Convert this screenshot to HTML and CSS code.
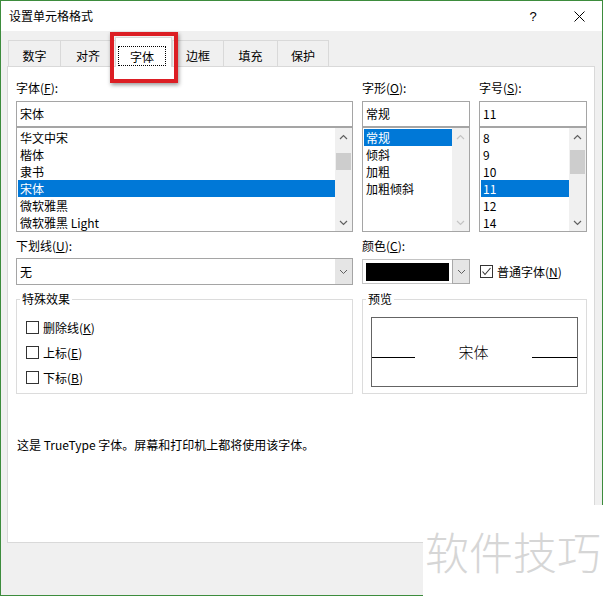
FILE: index.html
```html
<!DOCTYPE html>
<html lang="zh-CN">
<head>
<meta charset="utf-8">
<title>设置单元格格式</title>
<link rel="stylesheet" href="styles.css">
</head>
<body>
<div class="window">
  <div class="titlebar">
    <div class="title">设置单元格格式</div>
    <div class="tb-buttons">
      <div class="tb-btn help">?</div>
      <div class="tb-btn">
        <svg width="11" height="11" viewBox="0 0 11 11"><path d="M0.5 0.5 L10.5 10.5 M10.5 0.5 L0.5 10.5" stroke="#000" stroke-width="1" fill="none"/></svg>
      </div>
    </div>
  </div>

  <div class="tabstrip">
    <div class="tab t-num">数字</div>
    <div class="tab t-align">对齐</div>
    <div class="tab tab-active"><span class="focus">字体</span></div>
    <div class="tab t-border">边框</div>
    <div class="tab t-fill">填充</div>
    <div class="tab t-protect">保护</div>
  </div>

  <div class="panel">
    <div class="grid">
      <div class="field">
        <div class="label">字体(<u>F</u>):</div>
        <div class="textbox">宋体</div>
        <div class="listbox">
          <ul class="items">
            <li>华文中宋</li>
            <li>楷体</li>
            <li>隶书</li>
            <li class="sel">宋体</li>
            <li>微软雅黑</li>
            <li>微软雅黑 Light</li>
          </ul>
          <div class="scrollbar">
            <div class="sb-arrow"><svg width="9" height="6" viewBox="0 0 9 6"><polyline points="1,5 4.5,1.5 8,5" fill="none" stroke="#606060" stroke-width="1.2"/></svg></div>
            <div class="sb-track"><div class="thumb thumb-font"></div></div>
            <div class="sb-arrow"><svg width="9" height="6" viewBox="0 0 9 6"><polyline points="1,1 4.5,4.5 8,1" fill="none" stroke="#606060" stroke-width="1.2"/></svg></div>
          </div>
        </div>
      </div>

      <div class="field">
        <div class="label">字形(<u>O</u>):</div>
        <div class="textbox">常规</div>
        <div class="listbox">
          <ul class="items">
            <li class="sel">常规</li>
            <li>倾斜</li>
            <li>加粗</li>
            <li>加粗倾斜</li>
          </ul>
          <div class="scrollbar">
            <div class="sb-arrow"><svg width="9" height="6" viewBox="0 0 9 6"><polyline points="1,5 4.5,1.5 8,5" fill="none" stroke="#c4c4c4" stroke-width="1.2"/></svg></div>
            <div class="sb-track"></div>
            <div class="sb-arrow"><svg width="9" height="6" viewBox="0 0 9 6"><polyline points="1,1 4.5,4.5 8,1" fill="none" stroke="#c4c4c4" stroke-width="1.2"/></svg></div>
          </div>
        </div>
      </div>

      <div class="field">
        <div class="label">字号(<u>S</u>):</div>
        <div class="textbox">11</div>
        <div class="listbox">
          <ul class="items">
            <li>8</li>
            <li>9</li>
            <li>10</li>
            <li class="sel">11</li>
            <li>12</li>
            <li>14</li>
          </ul>
          <div class="scrollbar">
            <div class="sb-arrow"><svg width="9" height="6" viewBox="0 0 9 6"><polyline points="1,5 4.5,1.5 8,5" fill="none" stroke="#606060" stroke-width="1.2"/></svg></div>
            <div class="sb-track"><div class="thumb thumb-size"></div></div>
            <div class="sb-arrow"><svg width="9" height="6" viewBox="0 0 9 6"><polyline points="1,1 4.5,4.5 8,1" fill="none" stroke="#606060" stroke-width="1.2"/></svg></div>
          </div>
        </div>
      </div>

      <div class="field row2">
        <div class="label">下划线(<u>U</u>):</div>
        <div class="combo">
          <div class="combo-text">无</div>
          <div class="combo-btn"><svg width="9" height="6" viewBox="0 0 9 6"><polyline points="1,1 4.5,4.5 8,1" fill="none" stroke="#606060" stroke-width="1"/></svg></div>
        </div>
      </div>

      <div class="field row2">
        <div class="label">颜色(<u>C</u>):</div>
        <div class="combo color-combo">
          <div class="swatch"></div>
          <div class="combo-btn color-btn"><svg width="9" height="6" viewBox="0 0 9 6"><polyline points="1,1 4.5,4.5 8,1" fill="none" stroke="#606060" stroke-width="1"/></svg></div>
        </div>
      </div>

      <div class="cb-normal">
        <span class="cb"><svg width="11" height="11" viewBox="0 0 11 11"><polyline points="1.5,5.5 4,8.5 9.5,2" fill="none" stroke="#333" stroke-width="1.1"/></svg></span>
        <span>普通字体(<u>N</u>)</span>
      </div>

      <fieldset class="group">
        <legend>特殊效果</legend>
        <div class="cb-list">
          <div class="cb-row"><span class="cb"></span><span>删除线(<u>K</u>)</span></div>
          <div class="cb-row"><span class="cb"></span><span>上标(<u>E</u>)</span></div>
          <div class="cb-row"><span class="cb"></span><span>下标(<u>B</u>)</span></div>
        </div>
      </fieldset>

      <fieldset class="group group-preview">
        <legend>预览</legend>
        <div class="preview-box">
          <span class="pline pline-left"></span>
          <span class="preview-text">宋体</span>
          <span class="pline pline-right"></span>
        </div>
      </fieldset>
    </div>

    <p class="desc">这是 TrueType 字体。屏幕和打印机上都将使用该字体。</p>
  </div>

  <div class="callout"></div>
  <div class="watermark">软件技巧</div>
</div>
</body>
</html>
```

FILE: styles.css
```css
* {
  box-sizing: border-box;
}

html,
body {
  margin: 0;
  padding: 0;
}

body {
  width: 603px;
  height: 596px;
  overflow: hidden;
  font-family: "Noto Sans CJK SC", "Noto Sans", sans-serif;
  font-size: 12px;
  color: #000;
  background: #fff;
}

.window {
  position: relative;
  width: 603px;
  height: 596px;
  border: 1px solid #3d8c3d;
  background: #f0f0f0;
}

/* title bar */
.titlebar {
  height: 30px;
  background: #fff;
  display: flex;
  justify-content: space-between;
}

.title {
  padding-left: 8px;
  line-height: 30px;
}

.tb-buttons {
  display: flex;
}

.tb-btn {
  width: 46px;
  display: flex;
  align-items: center;
  justify-content: center;
}

.help {
  font-family: "Liberation Sans", sans-serif;
  font-size: 13px;
}

/* tabs */
.tabstrip {
  height: 36px;
  display: flex;
  align-items: flex-end;
  padding-left: 7px;
}

.tab {
  height: 26px;
  margin-bottom: 1px;
  border: 1px solid #d9d9d9;
  border-right: none;
  border-bottom: none;
  background: #f0f0f0;
  display: flex;
  justify-content: center;
  align-items: center;
  padding-top: 3px;
}

.t-num { width: 52px; }
.t-align { width: 55px; }
.t-border { width: 51px; }
.t-fill { width: 54px; }
.t-protect {
  width: 52px;
  border-right: 1px solid #d9d9d9;
}

.tab-active {
  width: 57px;
  height: 30px;
  margin-bottom: 0;
  background: #fff;
  border-right: 1px solid #d9d9d9;
  position: relative;
  z-index: 1;
  align-items: flex-start;
  justify-content: flex-start;
  padding: 8px 0 0 2px;
}

.focus {
  width: 48px;
  height: 20px;
  border: 1px dotted #000;
  display: flex;
  align-items: center;
  justify-content: center;
}

/* main panel */
.panel {
  margin: -1px 7px 0 6px;
  height: 477px;
  background: #fff;
  border: 1px solid #d9d9d9;
  padding: 13px 6px 0 8px;
}

.grid {
  display: grid;
  grid-template-columns: 337px 108px 108px;
  column-gap: 9px;
}

.field {
  display: flex;
  flex-direction: column;
}

.label {
  height: 16px;
  line-height: 16px;
  white-space: nowrap;
}

.textbox {
  margin-top: 5px;
  height: 26px;
  border: 1px solid #a5a5a5;
  padding-left: 3px;
  line-height: 24px;
}

.listbox {
  height: 105px;
  border: 1px solid #a5a5a5;
  display: flex;
  background: #fff;
}

.items {
  list-style: none;
  margin: 0;
  padding: 1px 0 0 1px;
  flex: 1;
  overflow: hidden;
}

.items li {
  height: 17px;
  line-height: 17px;
  padding-left: 2px;
  white-space: nowrap;
}

.items li.sel {
  background: #0078d7;
  color: #fff;
}

.scrollbar {
  width: 17px;
  background: #f0f0f0;
  display: flex;
  flex-direction: column;
}

.sb-arrow {
  height: 17px;
  display: flex;
  align-items: center;
  justify-content: center;
}

.sb-track {
  flex: 1;
}

.thumb {
  margin: 0 1px;
  background: #cdcdcd;
}

.thumb-font {
  margin-top: 8px;
  height: 17px;
}

.thumb-size {
  margin-top: 5px;
  height: 24px;
}

/* row 2 */
.row2 {
  margin-top: 6px;
}

.combo {
  margin-top: 4px;
  height: 27px;
  border: 1px solid #a5a5a5;
  display: flex;
  background: #fff;
}

.combo-text {
  flex: 1;
  padding-left: 3px;
  line-height: 25px;
}

.combo-btn {
  width: 17px;
  background: #e5e5e5;
  display: flex;
  align-items: center;
  justify-content: center;
}

.color-combo {
  margin-top: 5px;
  height: 25px;
  align-items: center;
  padding-left: 3px;
  border-color: #c4c4c4;
}

.swatch {
  width: 83px;
  height: 18px;
  background: #000;
}

.color-btn {
  margin-left: auto;
  height: 25px;
  width: 18px;
  border: 1px solid #a9a9a9;
  margin-right: -1px;
}

.cb-normal {
  align-self: end;
  height: 27px;
  display: flex;
  align-items: center;
  gap: 4px;
  padding-left: 1px;
}

.cb {
  width: 13px;
  height: 13px;
  border: 1px solid #333;
  background: #fff;
  display: flex;
  align-items: center;
  justify-content: center;
  flex: none;
}

/* group boxes */
.group {
  margin: 6px 0 0;
  min-width: 0;
  border: 1px solid #dcdcdc;
  padding: 12px 9px 6px;
}

.group legend {
  padding: 0 2px;
  margin-left: -6px;
  line-height: 16px;
}

.group-preview {
  grid-column: 2 / span 2;
  padding: 10px 8px 6px;
}

.group-preview legend {
  margin-left: -5px;
}

.cb-list {
  display: flex;
  flex-direction: column;
  gap: 8px;
}

.cb-row {
  height: 17px;
  display: flex;
  align-items: center;
  gap: 4px;
}

.preview-box {
  width: 207px;
  height: 70px;
  border: 1px solid #646464;
  display: flex;
  align-items: center;
  justify-content: space-between;
}

.pline {
  height: 1px;
  background: #000;
  margin-top: 10px;
}

.pline-left { width: 43px; }
.pline-right { width: 45px; }

.preview-text {
  font-size: 15px;
  font-weight: 300;
  line-height: 20px;
}

.desc {
  margin: 43px 0 0 1px;
  line-height: 16px;
}

/* overlays */
.callout {
  position: absolute;
  left: 109px;
  top: 31px;
  width: 68px;
  height: 51px;
  border: 4px solid #dc1e24;
  box-shadow: 1px 2px 4px rgba(0, 0, 0, 0.4);
  z-index: 2;
}

.watermark {
  position: absolute;
  left: 422px;
  top: 504px;
  right: -1px;
  bottom: -1px;
  background: #fff;
  display: flex;
  align-items: center;
  justify-content: center;
  font-size: 44px;
  font-weight: 300;
  color: #d6d6d6;
  z-index: 3;
}
```
